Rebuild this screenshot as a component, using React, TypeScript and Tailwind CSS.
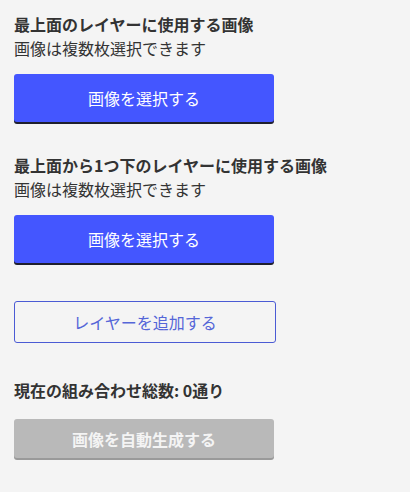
const font = { fontFamily: '"Noto Sans CJK JP", "Noto Sans", sans-serif' };

const LayerPicker = ({ title }: { title: string }) => {
  return (
    <div className="flex flex-col">
      <h2 className="text-base leading-6 font-bold text-[#333]">{title}</h2>
      <p className="text-base leading-6 text-[#333]">画像は複数枚選択できます</p>
      <button className="mt-[14px] h-12 w-[260px] rounded-[3px] bg-[#4456ff] text-base text-white shadow-[0_2px_0_#1f1f2e]">
        画像を選択する
      </button>
    </div>
  );
};

export default function App() {
  return (
    <div className="min-h-screen bg-[#f4f4f4] px-[14px] pt-3" style={font}>
      <LayerPicker title="最上面のレイヤーに使用する画像" />
      <div className="mt-[31px]">
        <LayerPicker title="最上面から1つ下のレイヤーに使用する画像" />
      </div>
      <button className="mt-[38px] h-[42px] w-[262px] rounded-[3px] border border-[#4b5bd4] bg-transparent text-base text-[#5566d8]">
        レイヤーを追加する
      </button>
      <p className="mt-[35px] text-base leading-6 font-bold text-[#333]">
        現在の組み合わせ総数: 0通り
      </p>
      <button
        disabled
        className="mt-[17px] h-[39px] w-[260px] rounded-[3px] bg-[#b9b9b9] text-base font-bold text-[#f4f4f4] shadow-[0_2px_0_#9a9a9a]"
      >
        画像を自動生成する
      </button>
    </div>
  );
}
